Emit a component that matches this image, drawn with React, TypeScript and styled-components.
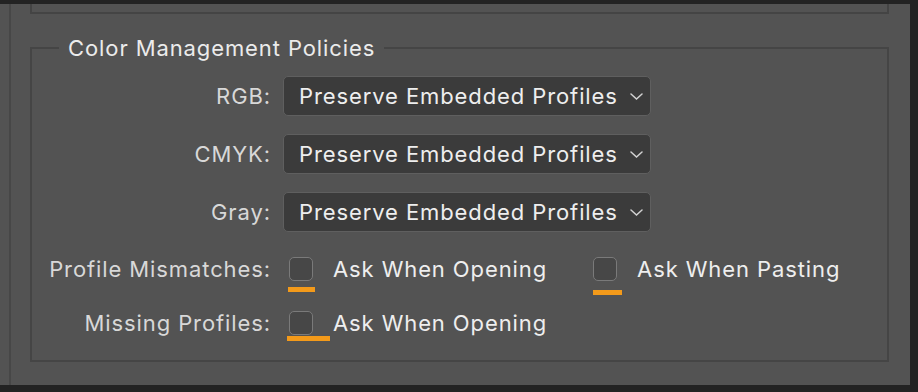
import React from 'react';
import styled, { createGlobalStyle } from 'styled-components';

const GlobalStyle = createGlobalStyle`
    body {
        margin: 0;
        background: #232323;
        font-family: Inter, "Noto Sans", sans-serif;
        letter-spacing: 0.9px;
    }
`;

const Window = styled.div`
    margin-top: 4px;
    width: 910px;
    height: 381px;
    background: #535353;
    padding-left: 9px;
    box-sizing: border-box;
    display: flex;
`;

const Inner = styled.div`
    flex: 1;
    border-left: 2px solid #474747;
    padding-left: 19px;
    display: flex;
    flex-direction: column;
`;

const PanelStub = styled.div`
    width: 859px;
    height: 10px;
    box-sizing: border-box;
    border: 2px solid #444444;
    border-top: none;
`;

const Group = styled.fieldset`
    margin: 22px 0 0;
    width: 859px;
    height: 326px;
    box-sizing: border-box;
    border: 2px solid #454545;
    padding: 0 0 0 27px;
    min-width: 0;
`;

const Legend = styled.legend`
    padding: 0 9px;
    font-size: 22px;
    line-height: 24px;
    color: #ebebeb;
`;

const Form = styled.div`
    display: flex;
    flex-direction: column;
    margin-left: -27px;
    padding-top: 16px;
`;

const Row = styled.div<{ $mt: number; $h: number }>`
    display: grid;
    grid-template-columns: 239px 1fr;
    column-gap: 12px;
    align-items: center;
    height: ${(p) => p.$h}px;
    margin-top: ${(p) => p.$mt}px;
`;

const Label = styled.div`
    text-align: right;
    font-size: 22px;
    color: #d8d8d8;
    white-space: nowrap;
`;

const Select = styled.div`
    width: 368px;
    height: 40px;
    box-sizing: border-box;
    background: #3b3b3b;
    border: 1.5px solid #5f5f5f;
    border-radius: 5px;
    padding: 0 7px 0 15px;
    display: flex;
    align-items: center;
    justify-content: space-between;
    font-size: 22px;
    color: #eeeeee;
`;

const Options = styled.div`
    display: flex;
    align-items: center;
    padding-left: 6px;
`;

const Option = styled.div<{ $ml?: number }>`
    display: flex;
    align-items: center;
    gap: 20px;
    margin-left: ${(p) => p.$ml ?? 0}px;
    font-size: 22px;
    color: #eeeeee;
    white-space: nowrap;
`;

const Box = styled.span`
    position: relative;
    width: 24px;
    height: 24px;
    box-sizing: border-box;
    border: 1.5px solid #7a7a7a;
    border-radius: 5px;
    background: #474747;
`;

const Mark = styled.span<{ $top: number; $left: number; $w: number }>`
    position: absolute;
    top: ${(p) => p.$top}px;
    left: ${(p) => p.$left}px;
    width: ${(p) => p.$w}px;
    height: 5px;
    background: #f39a1a;
`;

const Chevron = () => (
    <svg width="13" height="7" viewBox="0 0 13 7">
        <path d="M1 1l5.5 5 5.5-5" fill="none" stroke="#d2d2d2" strokeWidth="1.5" strokeLinecap="round" />
    </svg>
);

type Mk = { top: number; left: number; w: number };

const Check = ({ text, mark, ml }: { text: string; mark: Mk; ml?: number }) => (
    <Option $ml={ml}>
        <Box>
            <Mark $top={mark.top} $left={mark.left} $w={mark.w} />
        </Box>
        {text}
    </Option>
);

const spaces = ['RGB', 'CMYK', 'Gray'];

export default function App() {
    return (
        <>
            <GlobalStyle />
            <Window>
                <Inner>
                    <PanelStub />
                    <Group>
                        <Legend>Color Management Policies</Legend>
                        <Form>
                            {spaces.map((s, i) => (
                                <Row key={s} $h={40} $mt={i === 0 ? 0 : 18}>
                                    <Label>{s}:</Label>
                                    <Select>
                                        Preserve Embedded Profiles
                                        <Chevron />
                                    </Select>
                                </Row>
                            ))}
                            <Row $h={24} $mt={24}>
                                <Label>Profile Mismatches:</Label>
                                <Options>
                                    <Check text="Ask When Opening" mark={{ top: 5 + 24, left: -2, w: 27 }} />
                                    <Check text="Ask When Pasting" ml={46} mark={{ top: 8 + 24, left: -1, w: 29 }} />
                                </Options>
                            </Row>
                            <Row $h={24} $mt={30}>
                                <Label>Missing Profiles:</Label>
                                <Options>
                                    <Check text="Ask When Opening" mark={{ top: 0 + 24, left: -3, w: 43 }} />
                                </Options>
                            </Row>
                        </Form>
                    </Group>
                </Inner>
            </Window>
        </>
    );
}
